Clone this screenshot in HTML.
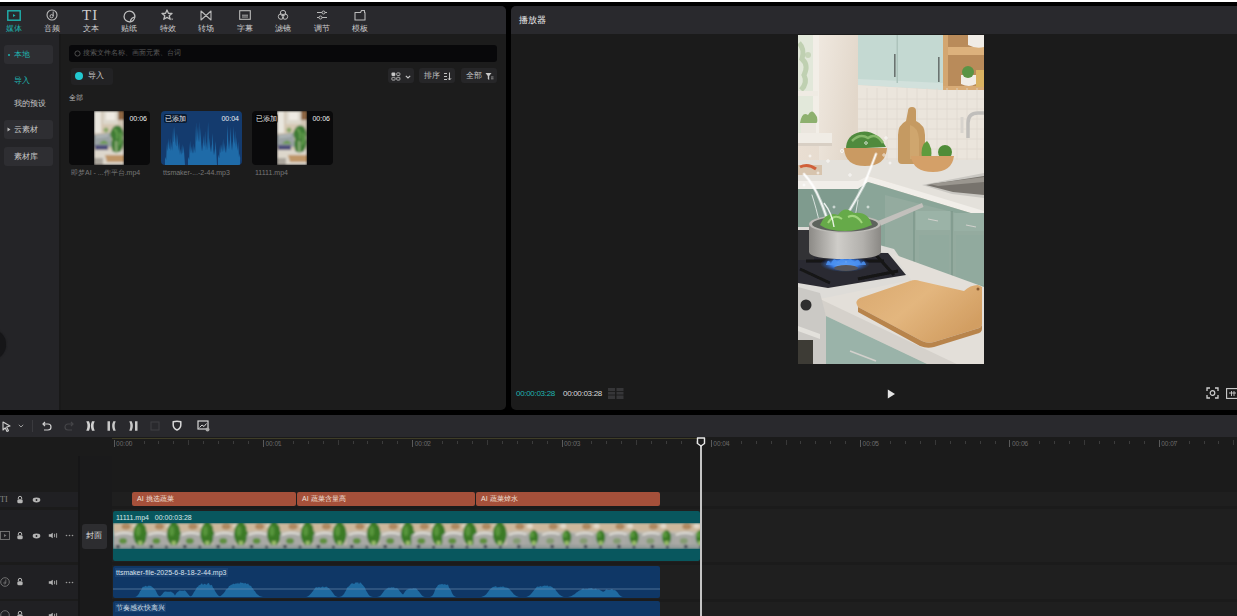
<!DOCTYPE html>
<html><head><meta charset="utf-8">
<style>
*{margin:0;padding:0;box-sizing:border-box}
html,body{width:1237px;height:616px;overflow:hidden;background:#000;font-family:"Liberation Sans",sans-serif;color:#ccc}
.a{position:absolute}
#top{left:0;top:0;width:1237px;height:2px;background:#fff}
#lp{left:0;top:6px;width:506px;height:404px;background:#1c1c1c;border-radius:0 5px 5px 0;overflow:hidden}
#lph{left:0;top:0;width:506px;height:28px;background:#29292d}
#side{left:0;top:28px;width:61px;height:376px;background:#242427;border-right:2px solid #191919}
#rp{left:511px;top:6px;width:726px;height:404px;background:#1b1b1b;border-radius:5px 0 0 5px;overflow:hidden}
#rph{left:0;top:0;width:726px;height:28px;background:#29292d}
#tl{left:0;top:415px;width:1237px;height:201px;background:#1b1b1b}
#tlb{left:0;top:0;width:1237px;height:22px;background:#29292d}
.ti{width:38px;text-align:center}
.ti svg{display:block;margin:0 auto}
.tl{font-size:7.5px;line-height:8px;font-weight:500;color:#cdcdcd;text-align:center;width:38px;white-space:nowrap}
.t{white-space:nowrap;line-height:1}
.tl,.sbt{font-weight:500}
.sb{left:4px;width:49px;height:19px;background:#2e2e32;border-radius:3px}
.card{width:81px;height:54px;background:#0a0a0b;border-radius:4px;overflow:hidden}
.dur{font-size:7px;color:#eee;top:4px;right:3px}
.added{font-size:7px;color:#eee;top:3px;left:3px;background:rgba(0,0,0,.55);padding:1px 1px;border-radius:2px}
.cname{font-size:7px;color:#777}
.rl{font-size:6.5px;color:#6a6a6a}
.clip{top:77px;height:14px;background:#a5503a;border-radius:2px}
.clip span{position:absolute;left:5px;top:3px;font-size:7px;color:#f0e0da;white-space:nowrap;line-height:1}
.strip{background:repeating-linear-gradient(90deg,#cfc5b5 0,#b8b0a5 8px,#5f8a3a 12px,#3f7a2a 20px,#c8bca8 26px,#cfc5b5 33px)}
.btn{height:15px;background:#262628;border-radius:3px}
</style></head><body>
<svg width="0" height="0" style="position:absolute"><defs><filter id="tb"><feGaussianBlur stdDeviation="0.8"/></filter></defs></svg>
<div class="a" id="top"></div>
<div class="a" id="lp">
  <div class="a" id="lph">
    <!-- toolbar icons -->
    <svg class="a" style="left:7px;top:4px" width="14" height="11" viewBox="0 0 14 11"><rect x="0.8" y="0.8" width="12.4" height="9.4" fill="none" stroke="#1fb3b0" stroke-width="1.4"/><path d="M6 4 L8.5 5.5 L6 7Z" fill="#1fb3b0"/></svg>
    <div class="a tl" style="left:-5px;top:19px;color:#1fb3b0">媒体</div>
    <svg class="a" style="left:46px;top:3px" width="12" height="12" viewBox="0 0 12 12"><circle cx="6" cy="6" r="5" fill="none" stroke="#bbb" stroke-width="1.1"/><path d="M7.2 2.5 V7" stroke="#bbb" stroke-width="1"/><circle cx="5.6" cy="7.2" r="1.6" fill="none" stroke="#bbb" stroke-width="1"/></svg>
    <div class="a tl" style="left:33px;top:19px">音频</div>
    <div class="a t" style="left:82px;top:2px;font-family:'Liberation Serif',serif;font-size:15px;color:#cdcdcd;letter-spacing:1px">TI</div>
    <div class="a tl" style="left:72px;top:19px">文本</div>
    <svg class="a" style="left:123px;top:4px" width="13" height="13" viewBox="0 0 13 13"><path d="M11.8 7.2 A5.4 5.4 0 1 0 7.2 11.8" fill="none" stroke="#bdbdbd" stroke-width="1.3"/><path d="M11.8 7.2 Q8 7.5 7.2 11.8 Q11 11.5 11.8 7.2Z" fill="none" stroke="#bdbdbd" stroke-width="1.2" stroke-linejoin="round"/></svg>
    <div class="a tl" style="left:110px;top:19px">贴纸</div>
    <svg class="a" style="left:161px;top:3px" width="13" height="13" viewBox="0 0 13 13"><path d="M6 1 L7.4 4.3 L11 4.5 L8.2 6.8 L9.2 10.3 L6 8.4 L2.8 10.3 L3.8 6.8 L1 4.5 L4.6 4.3Z" fill="none" stroke="#bdbdbd" stroke-width="1.3" stroke-linejoin="round"/><path d="M10.5 9.5 L12 11 M11.8 9.3 L10.3 11.2" stroke="#999" stroke-width="0.8"/></svg>
    <div class="a tl" style="left:149px;top:19px">特效</div>
    <svg class="a" style="left:200px;top:4px" width="12" height="11" viewBox="0 0 12 11"><path d="M1 1 L11 10 L11 1 L1 10Z" fill="none" stroke="#bbb" stroke-width="1.1" stroke-linejoin="round"/></svg>
    <div class="a tl" style="left:187px;top:19px">转场</div>
    <svg class="a" style="left:239px;top:4px" width="12" height="10" viewBox="0 0 12 10"><rect x="0.7" y="0.7" width="10.6" height="8.6" fill="none" stroke="#bbb" stroke-width="1.1"/><path d="M3 5.2 H9 M3 7 H9" stroke="#bbb" stroke-width="0.9"/></svg>
    <div class="a tl" style="left:226px;top:19px">字幕</div>
    <svg class="a" style="left:277px;top:3px" width="12" height="12" viewBox="0 0 12 12"><circle cx="6" cy="4" r="2.7" fill="none" stroke="#bbb" stroke-width="1"/><circle cx="4" cy="7.6" r="2.7" fill="none" stroke="#bbb" stroke-width="1"/><circle cx="8" cy="7.6" r="2.7" fill="none" stroke="#bbb" stroke-width="1"/></svg>
    <div class="a tl" style="left:264px;top:19px">滤镜</div>
    <svg class="a" style="left:316px;top:3px" width="12" height="12" viewBox="0 0 12 12"><path d="M1 3.5 H11 M1 8.5 H11" stroke="#bbb" stroke-width="1"/><circle cx="7.5" cy="3.5" r="1.5" fill="#29292d" stroke="#bbb" stroke-width="1"/><circle cx="4.5" cy="8.5" r="1.5" fill="#29292d" stroke="#bbb" stroke-width="1"/></svg>
    <div class="a tl" style="left:303px;top:19px">调节</div>
    <svg class="a" style="left:354px;top:3px" width="12" height="12" viewBox="0 0 12 12"><path d="M1 3.5 H6.5 L7.5 1.5 H10.5 V3.5 H11 V11 H1Z" fill="none" stroke="#bbb" stroke-width="1.1" stroke-linejoin="round"/></svg>
    <div class="a tl" style="left:341px;top:19px">模板</div>
  </div>
  <div class="a" id="side">
    <div class="a" style="left:-25px;top:295px;width:31px;height:31px;border-radius:50%;background:#161618;box-shadow:0 0 2px #161618"></div>
    <div class="a sb" style="top:11px"></div>
    <div class="a" style="left:8px;top:20px;width:2px;height:2px;border-radius:1px;background:#1fb3b0"></div>
    <div class="a t" style="left:14px;top:17px;font-size:8px;color:#1fb3b0">本地</div>
    <div class="a t" style="left:14px;top:43px;font-size:8px;color:#1fb3b0">导入</div>
    <div class="a t" style="left:14px;top:66px;font-size:8px;color:#c8c8c8">我的预设</div>
    <div class="a sb" style="top:86px"></div>
    <svg class="a" style="left:7px;top:93px" width="4" height="5"><path d="M0.5 0.5 L3.5 2.5 L0.5 4.5Z" fill="#bbb"/></svg>
    <div class="a t" style="left:14px;top:92px;font-size:8px;color:#c8c8c8">云素材</div>
    <div class="a sb" style="top:113px"></div>
    <div class="a t" style="left:14px;top:119px;font-size:8px;color:#c8c8c8">素材库</div>
  </div>
  <!-- search -->
  <div class="a" style="left:69px;top:39px;width:428px;height:17px;background:#08080a;border-radius:3px"></div>
  <svg class="a" style="left:74px;top:44px" width="7" height="7"><circle cx="3.5" cy="3.5" r="2.6" fill="none" stroke="#555" stroke-width="0.9"/></svg>
  <div class="a t" style="left:83px;top:44px;font-size:6.5px;color:#5a5a5a">搜索文件名称、画面元素、台词</div>
  <div class="a" style="left:71px;top:62px;width:42px;height:17px;background:#222224;border-radius:3px"></div>
  <div class="a" style="left:75px;top:66px;width:8px;height:8px;border-radius:50%;background:#22c8d0"></div>
  <div class="a t" style="left:88px;top:66px;font-size:8px;color:#c8c8c8">导入</div>
  <div class="a btn" style="left:388px;top:62px;width:26px"></div>
  <div class="a btn" style="left:419px;top:62px;width:36px"></div>
  <div class="a btn" style="left:461px;top:62px;width:36px"></div>
  <svg class="a" style="left:391px;top:66px" width="10" height="9" viewBox="0 0 10 9"><rect x="0.5" y="0.5" width="3.8" height="3.4" rx="1" fill="#c8c8c8"/><rect x="5.7" y="0.9" width="3.2" height="2.6" rx="0.6" fill="none" stroke="#bbb" stroke-width="0.9"/><rect x="0.9" y="5.3" width="3.2" height="2.8" rx="0.6" fill="none" stroke="#bbb" stroke-width="0.9"/><rect x="5.7" y="5.3" width="3.2" height="2.8" rx="0.6" fill="none" stroke="#bbb" stroke-width="0.9"/></svg>
  <svg class="a" style="left:405px;top:69px" width="6" height="4"><path d="M0.8 0.8 L3 3 L5.2 0.8" fill="none" stroke="#c8c8c8" stroke-width="1.1"/></svg>
  <div class="a t" style="left:424px;top:66px;font-size:7.5px;color:#c4c4c4">排序</div>
  <svg class="a" style="left:443px;top:66px" width="9" height="9" viewBox="0 0 9 9"><path d="M1 1.5 H4 M1 4.5 H4 M1 7.5 H4" stroke="#c4c4c4" stroke-width="1"/><path d="M6.5 0.5 V8 M5 6.3 L6.5 8 L8 6.3" fill="none" stroke="#c4c4c4" stroke-width="1"/></svg>
  <div class="a t" style="left:466px;top:66px;font-size:7.5px;color:#c4c4c4">全部</div>
  <svg class="a" style="left:485px;top:66px" width="9" height="9" viewBox="0 0 9 9"><path d="M0.5 1 H6.5 L4.2 4 V8 L2.8 7 V4Z" fill="#c8c8c8"/><path d="M6 5 H8.5 M6 6.8 H8.5" stroke="#aaa" stroke-width="0.8"/></svg>
  <div class="a t" style="left:69px;top:88px;font-size:7px;color:#bbb">全部</div>
  <!-- cards -->
  <div class="a card" style="left:69px;top:105px"><svg class="a" style="left:25px;top:0" width="30" height="54" viewBox="0 0 30 54"><g filter="url(#tb)"><rect width="30" height="54" fill="#d2c6b5"/><rect x="0" y="0" width="7" height="22" fill="#e9e6de"/><rect x="9" y="0" width="15" height="13" fill="#ddd8cc"/><rect x="12" y="1" width="9" height="8" fill="#efebe4"/><rect x="24" y="0" width="6" height="9" fill="#8e6642"/><rect x="7" y="13" width="14" height="10" fill="#d6c8b4"/><circle cx="12" cy="19" r="2.5" fill="#8aa868"/><path d="M0 24 L16 22 L18 36 H0Z" fill="#9aa2a4"/><path d="M2 26 L14 24.5" stroke="#c8cccc" stroke-width="1.2"/><path d="M5 33 Q10 26 15 33Z" fill="#6a9a50"/><rect x="1" y="34" width="13" height="6" fill="#50507a"/><rect x="0" y="39" width="30" height="15" fill="#ddd7cc"/><path d="M17 20 Q20 13 26 15 Q31 19 29 27 Q31 35 26 41 L19 41 Q16 34 18 28 Q15 23 17 20Z" fill="#3f7c34"/><path d="M20 18 Q24 20 23 28 M26 22 Q28 28 25 34" stroke="#6ea856" stroke-width="1.4" fill="none"/><rect x="21" y="30" width="2.5" height="12" fill="#86a870"/><path d="M11 44 H30 V51 H13Z" fill="#bf9668"/><rect x="0" y="47" width="9" height="7" fill="#aaa59c"/></g></svg><div class="a t dur">00:06</div></div>
  <div class="a card" style="left:161px;top:105px;background:#143b6e"><svg class="a" style="left:0;top:0" width="81" height="54"><path d="M4 54 L4.0 49.0 L4.6 45.7 L5.2 49.0 L5.5 40.2 L6.1 31.0 L6.7 40.2 L7.0 37.8 L7.6 27.1 L8.2 37.8 L8.5 37.7 L9.1 26.9 L9.7 37.7 L10.0 40.0 L10.6 30.6 L11.2 40.0 L11.5 31.1 L12.1 15.9 L12.7 31.1 L13.0 30.4 L13.6 14.7 L14.2 30.4 L14.5 34.8 L15.1 22.0 L15.7 34.8 L16.0 35.4 L16.6 23.0 L17.2 35.4 L17.5 40.0 L18.1 30.7 L18.7 40.0 L19.0 44.0 L19.6 37.4 L20.2 44.0 L20.5 41.5 L21.1 33.1 L21.7 41.5 L22.0 42.4 L22.6 34.6 L23.2 42.4 L24 54Z M27 54 L27.0 49.1 L27.6 45.8 L28.2 49.1 L28.5 39.4 L29.1 29.6 L29.7 39.4 L30.0 42.6 L30.6 35.0 L31.2 42.6 L31.5 41.2 L32.1 32.6 L32.7 41.2 L33.0 42.6 L33.6 34.9 L34.2 42.6 L34.5 28.3 L35.1 11.1 L35.7 28.3 L36.0 30.9 L36.6 15.4 L37.2 30.9 L37.5 28.0 L38.1 10.6 L38.7 28.0 L39.0 31.5 L39.6 16.5 L40.2 31.5 L40.5 40.5 L41.1 31.5 L41.7 40.5 L42.0 35.9 L42.6 23.8 L43.2 35.9 L43.5 33.5 L44.1 19.8 L44.7 33.5 L45.0 39.8 L45.6 30.3 L46.2 39.8 L46.5 28.1 L47.1 10.8 L47.7 28.1 L48.0 37.5 L48.6 26.5 L49.2 37.5 L49.5 41.4 L50.1 33.0 L50.7 41.4 L51.0 34.7 L51.6 21.9 L52.2 34.7 L52.5 44.3 L53.1 37.8 L53.7 44.3 L54.0 39.5 L54.6 29.8 L55.2 39.5 L56 54Z M57 54 L57.0 47.5 L57.6 43.2 L58.2 47.5 L58.5 41.8 L59.1 33.6 L59.7 41.8 L60.0 41.5 L60.6 33.1 L61.2 41.5 L61.5 38.1 L62.1 27.5 L62.7 38.1 L63.0 40.7 L63.6 31.8 L64.2 40.7 L64.5 42.1 L65.1 34.1 L65.7 42.1 L66.0 29.8 L66.6 13.6 L67.2 29.8 L67.5 38.7 L68.1 28.5 L68.7 38.7 L69.0 31.0 L69.6 15.7 L70.2 31.0 L70.5 39.7 L71.1 30.1 L71.7 39.7 L72.0 30.4 L72.6 14.6 L73.2 30.4 L73.5 33.1 L74.1 19.2 L74.7 33.1 L75.0 37.0 L75.6 25.7 L76.2 37.0 L76.5 39.9 L77.1 30.5 L77.7 39.9 L78.0 46.9 L78.6 42.2 L79.2 46.9 L79 54Z " fill="#1f6ba8"/></svg><div class="a t added">已添加</div><div class="a t dur">00:04</div></div>
  <div class="a card" style="left:252px;top:105px"><svg class="a" style="left:25px;top:0" width="30" height="54" viewBox="0 0 30 54"><g filter="url(#tb)"><rect width="30" height="54" fill="#d2c6b5"/><rect x="0" y="0" width="7" height="22" fill="#e9e6de"/><rect x="9" y="0" width="15" height="13" fill="#ddd8cc"/><rect x="12" y="1" width="9" height="8" fill="#efebe4"/><rect x="24" y="0" width="6" height="9" fill="#8e6642"/><rect x="7" y="13" width="14" height="10" fill="#d6c8b4"/><circle cx="12" cy="19" r="2.5" fill="#8aa868"/><path d="M0 24 L16 22 L18 36 H0Z" fill="#9aa2a4"/><path d="M2 26 L14 24.5" stroke="#c8cccc" stroke-width="1.2"/><path d="M5 33 Q10 26 15 33Z" fill="#6a9a50"/><rect x="1" y="34" width="13" height="6" fill="#50507a"/><rect x="0" y="39" width="30" height="15" fill="#ddd7cc"/><path d="M17 20 Q20 13 26 15 Q31 19 29 27 Q31 35 26 41 L19 41 Q16 34 18 28 Q15 23 17 20Z" fill="#3f7c34"/><path d="M20 18 Q24 20 23 28 M26 22 Q28 28 25 34" stroke="#6ea856" stroke-width="1.4" fill="none"/><rect x="21" y="30" width="2.5" height="12" fill="#86a870"/><path d="M11 44 H30 V51 H13Z" fill="#bf9668"/><rect x="0" y="47" width="9" height="7" fill="#aaa59c"/></g></svg><div class="a t added">已添加</div><div class="a t dur">00:06</div></div>
  <div class="a t cname" style="left:71px;top:163px">即梦AI - ...作平台.mp4</div>
  <div class="a t cname" style="left:163px;top:163px">ttsmaker-...-2-44.mp3</div>
  <div class="a t cname" style="left:255px;top:163px">11111.mp4</div>
</div>
<div class="a" id="rp">
  <div class="a" id="rph"><div class="a t" style="left:8px;top:10px;font-size:8.5px;font-weight:500;color:#e6e6e6">播放器</div></div>
  <div class="a" id="vid" style="left:287px;top:29px;width:186px;height:329px;background:#c9bca8;overflow:hidden"><svg class="a" style="left:0;top:0" width="186" height="329" viewBox="0 0 186 329">
<defs>
<filter id="bl" x="-5%" y="-5%" width="110%" height="110%"><feGaussianBlur stdDeviation="0.7"/></filter>
<linearGradient id="wall" x1="0" y1="0" x2="1" y2="0"><stop offset="0" stop-color="#e9ded2"/><stop offset="1" stop-color="#d9cbbb"/></linearGradient>
<linearGradient id="pot" x1="0" y1="0" x2="1" y2="0"><stop offset="0" stop-color="#8c8a86"/><stop offset="0.4" stop-color="#cfcdc9"/><stop offset="0.75" stop-color="#b2b0ac"/><stop offset="1" stop-color="#8a8884"/></linearGradient>
<linearGradient id="board" x1="0" y1="0" x2="1" y2="0.6"><stop offset="0" stop-color="#d9a86e"/><stop offset="0.5" stop-color="#e3b67e"/><stop offset="1" stop-color="#d29e62"/></linearGradient>
<linearGradient id="wall2" x1="0" y1="0" x2="1" y2="0.4"><stop offset="0" stop-color="#efe8df"/><stop offset="1" stop-color="#e2d7ca"/></linearGradient>
<radialGradient id="flame" cx="0.5" cy="0.5" r="0.5"><stop offset="0" stop-color="#9fd0ff"/><stop offset="0.55" stop-color="#3b7fe6"/><stop offset="1" stop-color="#2a4a9a" stop-opacity="0"/></radialGradient>
</defs>
<g filter="url(#bl)">
<rect width="186" height="329" fill="url(#wall)"/>
<!-- window -->
<rect x="0" y="0" width="17" height="98" fill="#e2e8da"/>
<path d="M1 8 Q7 14 4 24 Q11 30 6 40 Q10 48 3 55" stroke="#a9c096" stroke-width="5" fill="none" opacity="0.6"/><circle cx="10" cy="20" r="3" fill="#b5c8a4" opacity="0.6"/>
<rect x="15" y="0" width="6" height="104" fill="#f2eee7"/>
<rect x="0" y="56" width="20" height="5" fill="#efebe3"/>
<!-- wall shading -->
<rect x="21" y="0" width="39" height="125" fill="url(#wall2)"/>
<!-- upper cabinets -->
<path d="M60 0 H145 V55 L60 50Z" fill="#c4d9d2"/>
<path d="M60 44 L145 48 V55 L60 50Z" fill="#d2e1dc"/>
<rect x="98.5" y="0" width="1.5" height="48" fill="#adc4bc"/>
<rect x="96" y="19" width="1.6" height="23" fill="#6b736f"/>
<rect x="140" y="22" width="1.6" height="25" fill="#6b736f"/>
<!-- shelf -->
<rect x="145" y="0" width="41" height="61" fill="#d3a670"/>
<rect x="150" y="0" width="36" height="51" fill="#b98b5a"/>
<rect x="150" y="12" width="36" height="8" fill="#dcb17c"/>
<rect x="145" y="51" width="41" height="10" fill="#d8ab76"/>
<path d="M170 0 H186 V12 Q178 14 170 10Z" fill="#f0ece6"/>
<path d="M163 40 H178 V49 Q171 53 163 49Z" fill="#f1ede7"/>
<circle cx="170" cy="37" r="6" fill="#5a9444"/>
<rect x="178" y="35" width="8" height="17" fill="#d9b262"/>
<!-- backsplash -->
<path d="M60 50 L145 55 H186 V125 H60Z" fill="#ebe5dc"/>
<g stroke="#e0d9cf" stroke-width="0.8"><path d="M60 64H186 M60 74H186 M60 84H186 M60 94H186 M60 104H186 M60 114H186 M60 124H186"/><path d="M69 53V125 M79 53V125 M89 53V125 M99 53V125 M109 53V125 M119 53V125 M129 53V125 M139 53V125 M149 53V125 M159 53V125 M169 53V125 M179 53V125"/></g>
<!-- counter back -->
<path d="M0 125 H186 V178 L87 146 L70 141 L60 150 H0Z" fill="#e4e1db"/>
<path d="M0 146 H60 L70 141 L87 146 L186 176 V182 L87 152 L70 147 L60 154 H0Z" fill="#f1eee9"/>
<path d="M0 130 H24 V140 H0Z" fill="#d7c4ae"/>
<path d="M2 132 Q10 128 18 134" stroke="#d0603a" stroke-width="3" fill="none"/>
<!-- sink -->
<path d="M124 150 L186 138 V163 L154 159Z" fill="#c9c7c2"/><path d="M128 150 L186 141 V160 L155 157Z" fill="#77736d"/><path d="M132 149 L186 142 V147 L140 151Z" fill="#9a968f"/>
<!-- sill + plant -->
<rect x="0" y="98" width="34" height="10" fill="#f0ece5"/>
<rect x="0" y="108" width="34" height="3" fill="#d8cfc4"/>
<path d="M3 88 H18 V98 H3Z" fill="#ebe6de"/>
<path d="M2 88 Q4 76 10 80 Q14 72 19 82 Q20 88 18 88Z" fill="#8db06e"/>
<!-- faucet -->
<path d="M170 103 V88 Q170 78 180 78 H186" stroke="#c0bebb" stroke-width="3.5" fill="none"/>
<path d="M164 82 V98" stroke="#d8d4ce" stroke-width="3"/>
<!-- standing board -->
<path d="M110 76 Q110 72 114 72 Q118 72 118 76 V86 Q127 90 127 100 V126 Q127 129 123 129 H104 Q100 129 100 125 V100 Q100 90 108 86Z" fill="#c59a62"/>
<path d="M112 90 Q120 92 121 104 V124 H112Z" fill="#d3ab74" opacity="0.7"/>
<!-- bowls -->
<path d="M48 114 Q48 100 62 97 Q78 94 88 112Z" fill="#4f8a3d"/>
<path d="M54 106 Q62 98 70 103 Q78 97 85 108" stroke="#86b86a" stroke-width="2.5" fill="none"/>
<path d="M46 113 H89 Q88 131 67 131 Q47 131 46 113Z" fill="#ca9a62"/>
<path d="M124 124 Q122 110 129 106 Q135 112 133 124Z" fill="#5e9b3e"/>
<circle cx="147" cy="117" r="7" fill="#4f8c38"/>
<path d="M113 121 H156 Q154 137 135 137 Q115 137 113 121Z" fill="#d4a068"/>
<!-- lower cabinets -->
<path d="M0 154 H60 L70 147 L87 152 L186 182 V262 H0Z" fill="#8aa598"/>
<path d="M87 160 L186 185 V250 H87Z" fill="#94ab9f"/>
<rect x="118" y="176" width="34" height="19" fill="#9bb3a7"/>
<rect x="156" y="178" width="30" height="18" fill="#98b0a4"/>
<rect x="121" y="200" width="30" height="48" fill="#91aa9e"/>
<rect x="158" y="200" width="28" height="50" fill="#91aa9e"/>
<path d="M116 175 V250 M154 176 V250" stroke="#7a9488" stroke-width="1.2"/>
<path d="M130 184 L140 186 M168 190 L178 192" stroke="#d0d0cc" stroke-width="1.2"/>
<path d="M0 154 H60 L60 215 H0Z" fill="#7f9b8e"/>
<!-- water splash -->
<g stroke="#ffffff" fill="none" stroke-linecap="round">
<path d="M6 139 Q16 150 22 165 Q28 178 32 196" stroke-width="3" opacity="0.55"/>
<path d="M6 139 Q16 150 22 165 Q28 178 32 196" stroke-width="1.2" opacity="0.9"/>
<path d="M78 119 Q72 135 66 150 Q58 165 50 178 Q46 186 44 194" stroke-width="3" opacity="0.5"/>
<path d="M78 119 Q72 135 66 150 Q58 165 50 178 Q46 186 44 194" stroke-width="1.2" opacity="0.9"/>
<path d="M14 160 Q18 172 22 190" stroke-width="1" opacity="0.7"/>
<path d="M60 165 Q58 176 56 190" stroke-width="1" opacity="0.7"/>
</g>
<g fill="none" stroke="#fff" stroke-width="0.8" opacity="0.9">
<circle cx="44" cy="116" r="1.5"/><circle cx="30" cy="126" r="1.2"/><circle cx="68" cy="108" r="1.3"/><circle cx="20" cy="138" r="1"/><circle cx="86" cy="120" r="1.2"/><circle cx="12" cy="121" r="1"/><circle cx="52" cy="140" r="1.2"/><circle cx="36" cy="172" r="1"/><circle cx="88" cy="103" r="1.2"/><circle cx="92" cy="128" r="1"/><circle cx="6" cy="150" r="1"/><circle cx="70" cy="172" r="1"/>
</g>
<!-- stove body -->
<path d="M0 192 H15 L96 214 L116 243 L97 255 L22 264 L0 262Z" fill="#dedcd8"/>
<path d="M0 217 L90 218 L108 240 L30 253 L0 248Z" fill="#2b2b30"/>
<path d="M0 195 H16 V225 H0Z" fill="#303035"/>
<path d="M2 234 L32 248 M78 220 L96 240 M8 226 H86 M60 244 L100 236" stroke="#131317" stroke-width="3"/>
<ellipse cx="47" cy="229" rx="25" ry="8" fill="url(#flame)"/><path d="M28 230 Q30 222 33 229 Q36 220 40 228 Q44 219 48 228 Q52 220 56 228 Q60 221 63 229 Q66 223 68 230Z" fill="#4a90f0" opacity="0.85"/>
<ellipse cx="48" cy="233" rx="12" ry="3" fill="#55555a"/>
<!-- pot -->
<path d="M80 186 L124 168 L125.5 172 L82 191Z" fill="#c2c0bc"/>
<path d="M11 189 H83 V217 Q82 224 47 224 Q12 224 11 217Z" fill="url(#pot)"/>
<ellipse cx="47" cy="189" rx="36" ry="9" fill="#bdbbb7"/>
<ellipse cx="47" cy="189" rx="33" ry="7.5" fill="#5d645c"/>
<path d="M22 190 Q28 176 40 180 Q46 170 56 178 Q70 176 74 190 Q60 196 47 196 Q30 196 22 190Z" fill="#66aa48"/>
<path d="M30 188 Q36 178 44 184 M50 182 Q58 178 64 188" stroke="#a2d67e" stroke-width="2" fill="none"/>
<path d="M26 168 Q34 178 36 192" stroke="#fff" stroke-width="1.4" fill="none" opacity="0.85"/>
<!-- counter right -->
<path d="M95 219 L186 252 V329 H129 L28 281 L22 264 L113 245Z" fill="#e3dfd9"/>
<path d="M22 264 L186 342 V356 L28 281Z" fill="#d5d1cb"/>
<path d="M28 281 L129 329 H28Z" fill="#9ab3a9"/>
<!-- cutting board -->
<path d="M60 272 Q56 266 62 263 L112 246 Q117 244 122 246 L166 256 Q172 250 180 250 L184 252 V289 Q184 293 178 294 L136 307 Q130 309 124 306 Z" fill="url(#board)"/>
<path d="M60 272 L124 306 Q130 309 136 307 L178 294 Q184 293 184 289 V294 Q184 298 178 299 L136 312 Q129 314 122 311 L60 277Z" fill="#b8844c"/>
<circle cx="180" cy="254" r="1.5" fill="#8a5a30"/>
<path d="M52 316 L78 326" stroke="#d2d0cc" stroke-width="1.6"/>
<!-- stove front -->
<path d="M0 252 L22 258 L28 281 V329 H0Z" fill="#cbc9c5"/>
<circle cx="8" cy="270" r="5.5" fill="#2d2d2d"/>
<path d="M0 291 L22 299 V304 L0 296Z" fill="#e3e1dc"/>
<rect x="0" y="305" width="15" height="24" fill="#3d3a36"/>
</g>
</svg>
</div>
  <div class="a t" style="left:5px;top:384px;font-size:8px;color:#1fb3b0;letter-spacing:-0.3px">00:00:03:28</div>
  <div class="a t" style="left:52px;top:384px;font-size:8px;color:#d8d8d8;letter-spacing:-0.3px">00:00:03:28</div>
  <svg class="a" style="left:97px;top:382px" width="16" height="11"><g fill="#363638"><rect x="0" y="0" width="7" height="11"/><rect x="8.5" y="0" width="7" height="11"/></g><path d="M0 3.5 H16 M0 7 H16" stroke="#1c1c1c" stroke-width="0.9"/></svg>
  <svg class="a" style="left:376px;top:383px" width="9" height="10"><path d="M0.8 0.5 L8 5 L0.8 9.5Z" fill="#e4e4e4"/></svg>
  <svg class="a" style="left:695px;top:381px" width="13" height="12" viewBox="0 0 13 12"><path d="M1 4 V1 H4 M9 1 H12 V4 M12 8 V11 H9 M4 11 H1 V8" fill="none" stroke="#cfcfcf" stroke-width="1.3"/><circle cx="6.5" cy="6" r="2.3" fill="none" stroke="#cfcfcf" stroke-width="1.2"/></svg>
  <svg class="a" style="left:715px;top:382px" width="12" height="11" viewBox="0 0 12 11"><rect x="0.6" y="0.6" width="11" height="9.8" fill="none" stroke="#cfcfcf" stroke-width="1.1"/><path d="M3 5 H10 M5.5 3 V8 M8 3 V8" stroke="#cfcfcf" stroke-width="0.9"/></svg>
</div>
<div class="a" id="tl">
  <div class="a" id="tlb">
    <svg class="a" style="left:2px;top:6px" width="9" height="11" viewBox="0 0 9 11"><path d="M1 1 L8 5 L4.6 6 L6.5 9.8 L5 10.4 L3.2 6.8 L1 9Z" fill="none" stroke="#cfcfcf" stroke-width="1.1" stroke-linejoin="round"/></svg>
    <svg class="a" style="left:18px;top:9px" width="6" height="4"><path d="M0.8 0.8 L3 3 L5.2 0.8" fill="none" stroke="#9a9a9a" stroke-width="1"/></svg>
    <div class="a" style="left:32px;top:5px;width:1px;height:12px;background:#3a3a3e"></div>
    <svg class="a" style="left:42px;top:6px" width="10" height="10" viewBox="0 0 10 10"><path d="M3 1 L1 3 L3 5 M1 3 H6 A3 3 0 0 1 6 9 H2" fill="none" stroke="#d0d0d0" stroke-width="1.2"/></svg>
    <svg class="a" style="left:64px;top:6px" width="10" height="10" viewBox="0 0 10 10"><path d="M7 1 L9 3 L7 5 M9 3 H4 A3 3 0 0 0 4 9 H8" fill="none" stroke="#454548" stroke-width="1.2"/></svg>
    <svg class="a" style="left:86px;top:6px" width="9" height="10" viewBox="0 0 9 10"><path d="M0.3 0.3 H3 Q5.2 5 3 9.7 H0.3 Q2.6 5 0.3 0.3Z M8.7 0.3 H6 Q3.8 5 6 9.7 H8.7 Q6.4 5 8.7 0.3Z" fill="#d0d0d0"/></svg>
    <svg class="a" style="left:107px;top:6px" width="9" height="10" viewBox="0 0 9 10"><path d="M0.5 0.3 H3 V9.7 H0.5Z M8.7 0.3 H6.3 Q4 5 6.3 9.7 H8.7 Q6.6 5 8.7 0.3Z" fill="#c8c8c8"/></svg>
    <svg class="a" style="left:129px;top:6px" width="9" height="10" viewBox="0 0 9 10"><path d="M0.3 0.3 H2.7 Q5 5 2.7 9.7 H0.3 Q2.4 5 0.3 0.3Z M6 0.3 H8.5 V9.7 H6Z" fill="#c8c8c8"/></svg>
    <svg class="a" style="left:150px;top:6px" width="10" height="10" viewBox="0 0 10 10"><rect x="1" y="1" width="8" height="8" fill="none" stroke="#3e3e42" stroke-width="1.1"/></svg>
    <svg class="a" style="left:172px;top:5px" width="10" height="11" viewBox="0 0 10 11"><path d="M1.2 1.8 Q5 0.6 8.8 1.8 V5 Q8.8 8.4 5 10 Q1.2 8.4 1.2 5Z" fill="none" stroke="#d8d8d8" stroke-width="1.5" stroke-linejoin="round"/></svg>
    <svg class="a" style="left:197px;top:5px" width="13" height="12" viewBox="0 0 13 12"><rect x="1" y="1" width="10" height="8" fill="none" stroke="#d8d8d8" stroke-width="1.2"/><path d="M2.5 7.5 L5 5 L7 6.5 L9.5 3.5" fill="none" stroke="#d8d8d8" stroke-width="1"/><circle cx="10.5" cy="9.5" r="2" fill="#aaa"/></svg>
  </div>
  <div class="a" style="left:112px;top:23px;width:589px;height:1px;background:#3f3d28"></div>
  <div class="a" style="left:80px;top:41px;width:32px;height:160px;background:#1a1a1b"></div>
  <div class="a" style="left:78px;top:41px;width:2px;height:160px;background:#161617"></div>
  <div class="a" style="left:113.6px;top:25px;width:1px;height:7px;background:#5a5a5a"></div>
  <div class="a" style="left:128.5px;top:26px;width:1px;height:3px;background:#3c3c3c"></div>
  <div class="a" style="left:143.5px;top:26px;width:1px;height:3px;background:#3c3c3c"></div>
  <div class="a" style="left:158.4px;top:26px;width:1px;height:3px;background:#3c3c3c"></div>
  <div class="a" style="left:173.3px;top:26px;width:1px;height:3px;background:#3c3c3c"></div>
  <div class="a" style="left:188.2px;top:25px;width:1px;height:5px;background:#383838"></div>
  <div class="a" style="left:203.2px;top:26px;width:1px;height:3px;background:#3c3c3c"></div>
  <div class="a" style="left:218.1px;top:26px;width:1px;height:3px;background:#3c3c3c"></div>
  <div class="a" style="left:233.0px;top:26px;width:1px;height:3px;background:#3c3c3c"></div>
  <div class="a" style="left:248.0px;top:26px;width:1px;height:3px;background:#3c3c3c"></div>
  <div class="a" style="left:262.9px;top:25px;width:1px;height:7px;background:#5a5a5a"></div>
  <div class="a" style="left:277.8px;top:26px;width:1px;height:3px;background:#3c3c3c"></div>
  <div class="a" style="left:292.8px;top:26px;width:1px;height:3px;background:#3c3c3c"></div>
  <div class="a" style="left:307.7px;top:26px;width:1px;height:3px;background:#3c3c3c"></div>
  <div class="a" style="left:322.6px;top:26px;width:1px;height:3px;background:#3c3c3c"></div>
  <div class="a" style="left:337.5px;top:25px;width:1px;height:5px;background:#383838"></div>
  <div class="a" style="left:352.5px;top:26px;width:1px;height:3px;background:#3c3c3c"></div>
  <div class="a" style="left:367.4px;top:26px;width:1px;height:3px;background:#3c3c3c"></div>
  <div class="a" style="left:382.3px;top:26px;width:1px;height:3px;background:#3c3c3c"></div>
  <div class="a" style="left:397.3px;top:26px;width:1px;height:3px;background:#3c3c3c"></div>
  <div class="a" style="left:412.2px;top:25px;width:1px;height:7px;background:#5a5a5a"></div>
  <div class="a" style="left:427.1px;top:26px;width:1px;height:3px;background:#3c3c3c"></div>
  <div class="a" style="left:442.1px;top:26px;width:1px;height:3px;background:#3c3c3c"></div>
  <div class="a" style="left:457.0px;top:26px;width:1px;height:3px;background:#3c3c3c"></div>
  <div class="a" style="left:471.9px;top:26px;width:1px;height:3px;background:#3c3c3c"></div>
  <div class="a" style="left:486.9px;top:25px;width:1px;height:5px;background:#383838"></div>
  <div class="a" style="left:501.8px;top:26px;width:1px;height:3px;background:#3c3c3c"></div>
  <div class="a" style="left:516.7px;top:26px;width:1px;height:3px;background:#3c3c3c"></div>
  <div class="a" style="left:531.6px;top:26px;width:1px;height:3px;background:#3c3c3c"></div>
  <div class="a" style="left:546.6px;top:26px;width:1px;height:3px;background:#3c3c3c"></div>
  <div class="a" style="left:561.5px;top:25px;width:1px;height:7px;background:#5a5a5a"></div>
  <div class="a" style="left:576.4px;top:26px;width:1px;height:3px;background:#3c3c3c"></div>
  <div class="a" style="left:591.4px;top:26px;width:1px;height:3px;background:#3c3c3c"></div>
  <div class="a" style="left:606.3px;top:26px;width:1px;height:3px;background:#3c3c3c"></div>
  <div class="a" style="left:621.2px;top:26px;width:1px;height:3px;background:#3c3c3c"></div>
  <div class="a" style="left:636.1px;top:25px;width:1px;height:5px;background:#383838"></div>
  <div class="a" style="left:651.1px;top:26px;width:1px;height:3px;background:#3c3c3c"></div>
  <div class="a" style="left:666.0px;top:26px;width:1px;height:3px;background:#3c3c3c"></div>
  <div class="a" style="left:680.9px;top:26px;width:1px;height:3px;background:#3c3c3c"></div>
  <div class="a" style="left:695.9px;top:26px;width:1px;height:3px;background:#3c3c3c"></div>
  <div class="a" style="left:710.8px;top:25px;width:1px;height:7px;background:#5a5a5a"></div>
  <div class="a" style="left:725.7px;top:26px;width:1px;height:3px;background:#3c3c3c"></div>
  <div class="a" style="left:740.7px;top:26px;width:1px;height:3px;background:#3c3c3c"></div>
  <div class="a" style="left:755.6px;top:26px;width:1px;height:3px;background:#3c3c3c"></div>
  <div class="a" style="left:770.5px;top:26px;width:1px;height:3px;background:#3c3c3c"></div>
  <div class="a" style="left:785.5px;top:25px;width:1px;height:5px;background:#383838"></div>
  <div class="a" style="left:800.4px;top:26px;width:1px;height:3px;background:#3c3c3c"></div>
  <div class="a" style="left:815.3px;top:26px;width:1px;height:3px;background:#3c3c3c"></div>
  <div class="a" style="left:830.2px;top:26px;width:1px;height:3px;background:#3c3c3c"></div>
  <div class="a" style="left:845.2px;top:26px;width:1px;height:3px;background:#3c3c3c"></div>
  <div class="a" style="left:860.1px;top:25px;width:1px;height:7px;background:#5a5a5a"></div>
  <div class="a" style="left:875.0px;top:26px;width:1px;height:3px;background:#3c3c3c"></div>
  <div class="a" style="left:890.0px;top:26px;width:1px;height:3px;background:#3c3c3c"></div>
  <div class="a" style="left:904.9px;top:26px;width:1px;height:3px;background:#3c3c3c"></div>
  <div class="a" style="left:919.8px;top:26px;width:1px;height:3px;background:#3c3c3c"></div>
  <div class="a" style="left:934.8px;top:25px;width:1px;height:5px;background:#383838"></div>
  <div class="a" style="left:949.7px;top:26px;width:1px;height:3px;background:#3c3c3c"></div>
  <div class="a" style="left:964.6px;top:26px;width:1px;height:3px;background:#3c3c3c"></div>
  <div class="a" style="left:979.5px;top:26px;width:1px;height:3px;background:#3c3c3c"></div>
  <div class="a" style="left:994.5px;top:26px;width:1px;height:3px;background:#3c3c3c"></div>
  <div class="a" style="left:1009.4px;top:25px;width:1px;height:7px;background:#5a5a5a"></div>
  <div class="a" style="left:1024.3px;top:26px;width:1px;height:3px;background:#3c3c3c"></div>
  <div class="a" style="left:1039.3px;top:26px;width:1px;height:3px;background:#3c3c3c"></div>
  <div class="a" style="left:1054.2px;top:26px;width:1px;height:3px;background:#3c3c3c"></div>
  <div class="a" style="left:1069.1px;top:26px;width:1px;height:3px;background:#3c3c3c"></div>
  <div class="a" style="left:1084.1px;top:25px;width:1px;height:5px;background:#383838"></div>
  <div class="a" style="left:1099.0px;top:26px;width:1px;height:3px;background:#3c3c3c"></div>
  <div class="a" style="left:1113.9px;top:26px;width:1px;height:3px;background:#3c3c3c"></div>
  <div class="a" style="left:1128.8px;top:26px;width:1px;height:3px;background:#3c3c3c"></div>
  <div class="a" style="left:1143.8px;top:26px;width:1px;height:3px;background:#3c3c3c"></div>
  <div class="a" style="left:1158.7px;top:25px;width:1px;height:7px;background:#5a5a5a"></div>
  <div class="a" style="left:1173.6px;top:26px;width:1px;height:3px;background:#3c3c3c"></div>
  <div class="a" style="left:1188.6px;top:26px;width:1px;height:3px;background:#3c3c3c"></div>
  <div class="a" style="left:1203.5px;top:26px;width:1px;height:3px;background:#3c3c3c"></div>
  <div class="a" style="left:1218.4px;top:26px;width:1px;height:3px;background:#3c3c3c"></div>
  <div class="a" style="left:1233.4px;top:25px;width:1px;height:5px;background:#383838"></div>
  <div class="a t rl" style="left:116.1px;top:26px">00:00</div>
  <div class="a t rl" style="left:265.4px;top:26px">00:01</div>
  <div class="a t rl" style="left:414.7px;top:26px">00:02</div>
  <div class="a t rl" style="left:564.0px;top:26px">00:03</div>
  <div class="a t rl" style="left:713.3px;top:26px">00:04</div>
  <div class="a t rl" style="left:862.6px;top:26px">00:05</div>
  <div class="a t rl" style="left:1011.9px;top:26px">00:06</div>
  <div class="a t rl" style="left:1161.2px;top:26px">00:07</div>
  <!-- track headers -->
  <div class="a" style="left:0;top:77px;width:78px;height:15px;background:#202023"></div>
  <div class="a" style="left:0;top:95px;width:78px;height:52px;background:#202023"></div>
  <div class="a" style="left:0;top:150px;width:78px;height:34px;background:#202023"></div>
  <div class="a" style="left:0;top:186px;width:78px;height:15px;background:#202023"></div>
  <div class="a" style="left:112px;top:77px;width:1125px;height:14px;background:#1f1f1f"></div>
  <div class="a" style="left:112px;top:94px;width:1125px;height:53px;background:#1f1f1f"></div>
  <div class="a" style="left:112px;top:150px;width:1125px;height:34px;background:#1f1f1f"></div>
  <div class="a" style="left:112px;top:187px;width:1125px;height:14px;background:#1f1f1f"></div>
  <div class="a t" style="left:0px;top:81px;font-family:'Liberation Serif',serif;font-size:8px;color:#888">TI</div>
  <svg class="a" style="left:16px;top:80px" width="8" height="9" viewBox="0 0 8 9"><path d="M2.3 4.2 V3 A1.7 1.7 0 0 1 5.7 3 V4.2" fill="none" stroke="#b4b4b4" stroke-width="1"/><rect x="1.3" y="4.2" width="5.4" height="4" rx="1.5" fill="#b4b4b4"/></svg>
  <svg class="a" style="left:32px;top:82px" width="9" height="6" viewBox="0 0 9 6"><ellipse cx="4.5" cy="3" rx="3.8" ry="2.4" fill="#b4b4b4"/><circle cx="4.5" cy="3" r="0.9" fill="#202023"/></svg>
  <svg class="a" style="left:0px;top:116px" width="10" height="9" viewBox="0 0 10 9"><rect x="0.5" y="0.5" width="9" height="8" fill="none" stroke="#777" stroke-width="0.9"/><path d="M4 3 L6.5 4.5 L4 6Z" fill="#777"/></svg>
  <svg class="a" style="left:16px;top:116px" width="8" height="9" viewBox="0 0 8 9"><path d="M2.3 4.2 V3 A1.7 1.7 0 0 1 5.7 3 V4.2" fill="none" stroke="#b4b4b4" stroke-width="1"/><rect x="1.3" y="4.2" width="5.4" height="4" rx="1.5" fill="#b4b4b4"/></svg>
  <svg class="a" style="left:32px;top:118px" width="9" height="6" viewBox="0 0 9 6"><ellipse cx="4.5" cy="3" rx="3.8" ry="2.4" fill="#b4b4b4"/><circle cx="4.5" cy="3" r="0.9" fill="#202023"/></svg>
  <svg class="a" style="left:48px;top:117px" width="10" height="7" viewBox="0 0 10 7"><path d="M0.8 2.2 H2.5 L4.8 0.8 V6.2 L2.5 4.8 H0.8Z" fill="#b0b0b0"/><path d="M6.6 1.8 V5.2 M8.6 1.2 V5.8" stroke="#b0b0b0" stroke-width="0.9"/></svg>
  <svg class="a" style="left:65px;top:119px" width="9" height="3"><circle cx="1.5" cy="1.5" r="0.8" fill="#999"/><circle cx="4.5" cy="1.5" r="0.8" fill="#999"/><circle cx="7.5" cy="1.5" r="0.8" fill="#999"/></svg>
  <svg class="a" style="left:0px;top:162px" width="10" height="10" viewBox="0 0 10 10"><circle cx="5" cy="5" r="4.3" fill="none" stroke="#777" stroke-width="0.9"/><path d="M5.8 2.5 V5.8" stroke="#777" stroke-width="0.8"/><circle cx="4.8" cy="6" r="1" fill="none" stroke="#777" stroke-width="0.8"/></svg>
  <svg class="a" style="left:16px;top:162px" width="8" height="9" viewBox="0 0 8 9"><path d="M2.3 4.2 V3 A1.7 1.7 0 0 1 5.7 3 V4.2" fill="none" stroke="#b4b4b4" stroke-width="1"/><rect x="1.3" y="4.2" width="5.4" height="4" rx="1.5" fill="#b4b4b4"/></svg>
  <svg class="a" style="left:48px;top:164px" width="10" height="7" viewBox="0 0 10 7"><path d="M0.8 2.2 H2.5 L4.8 0.8 V6.2 L2.5 4.8 H0.8Z" fill="#b0b0b0"/><path d="M6.6 1.8 V5.2 M8.6 1.2 V5.8" stroke="#b0b0b0" stroke-width="0.9"/></svg>
  <svg class="a" style="left:65px;top:166px" width="9" height="3"><circle cx="1.5" cy="1.5" r="0.8" fill="#999"/><circle cx="4.5" cy="1.5" r="0.8" fill="#999"/><circle cx="7.5" cy="1.5" r="0.8" fill="#999"/></svg>
  <svg class="a" style="left:0px;top:195px" width="10" height="10" viewBox="0 0 10 10"><circle cx="5" cy="5" r="4.3" fill="none" stroke="#777" stroke-width="0.9"/></svg>
  <svg class="a" style="left:16px;top:195px" width="8" height="9" viewBox="0 0 8 9"><path d="M2.3 4.2 V3 A1.7 1.7 0 0 1 5.7 3 V4.2" fill="none" stroke="#b4b4b4" stroke-width="1"/><rect x="1.3" y="4.2" width="5.4" height="4" rx="1.5" fill="#b4b4b4"/></svg>
  <svg class="a" style="left:48px;top:197px" width="10" height="7" viewBox="0 0 10 7"><path d="M0.8 2.2 H2.5 L4.8 0.8 V6.2 L2.5 4.8 H0.8Z" fill="#b0b0b0"/><path d="M6.6 1.8 V5.2 M8.6 1.2 V5.8" stroke="#b0b0b0" stroke-width="0.9"/></svg>
  <div class="a" style="left:82px;top:109px;width:25px;height:25px;background:#2d2d30;border-radius:3px"></div>
  <div class="a t" style="left:86px;top:117px;font-size:8px;color:#e0e0e0">封面</div>
  <!-- text clips -->
  <div class="a clip" style="left:132px;width:164px"><span>AI 挑选蔬菜</span></div>
  <div class="a clip" style="left:297px;width:178px"><span>AI 蔬菜含量高</span></div>
  <div class="a clip" style="left:476px;width:184px"><span>AI 蔬菜焯水</span></div>
  <!-- video clip -->
  <div class="a" style="left:113px;top:96px;width:587px;height:50px;background:#08575e;border-radius:2px;overflow:hidden">
    <div class="a t" style="left:3px;top:3px;font-size:7px;color:#d8e8e8">11111.mp4&nbsp;&nbsp;&nbsp;00:00:03:28</div>
    <svg class="a" style="left:0;top:12px" width="587" height="26" viewBox="0 0 587 26"><g filter="url(#tb)"><rect width="587" height="26" fill="#c4bcae"/><rect x="0.0" y="0" width="33.4" height="8" fill="#cdb89c"/><ellipse cx="13.0" cy="3.5" rx="4.5" ry="3" fill="#a67c50" opacity="0.8"/><ellipse cx="23.0" cy="3" rx="3" ry="2.5" fill="#e8e2d6" opacity="0.8"/><path d="M0.0 12 Q12.0 6 22.0 11 V22 H0.0Z" fill="#a9a9a5"/><path d="M2.0 12 Q11.0 8 20.0 11.5" stroke="#e4e2dc" stroke-width="1.6" fill="none"/><ellipse cx="10.0" cy="18" rx="4" ry="3" fill="#5f9040" opacity="1"/><ellipse cx="27.2" cy="11.0" rx="7.0" ry="11.5" fill="#3a7a28"/><ellipse cx="25.2" cy="8.0" rx="2.5" ry="5.0" fill="#6aa648" opacity="0.6"/><rect x="25.2" y="18" width="4" height="6" fill="#98bc68"/><rect x="0.0" y="22" width="33.4" height="4" fill="#969c9a"/><circle cx="5.0" cy="23.5" r="1.8" fill="#2a3440"/><circle cx="20.0" cy="24" r="1.5" fill="#34404c"/><rect x="33.4" y="0" width="33.4" height="8" fill="#cdb89c"/><ellipse cx="46.4" cy="3.5" rx="4.5" ry="3" fill="#a67c50" opacity="0.8"/><ellipse cx="56.4" cy="3" rx="3" ry="2.5" fill="#e8e2d6" opacity="0.8"/><path d="M33.4 12 Q45.4 6 55.4 11 V22 H33.4Z" fill="#a9a9a5"/><path d="M35.4 12 Q44.4 8 53.4 11.5" stroke="#e4e2dc" stroke-width="1.6" fill="none"/><ellipse cx="43.4" cy="18" rx="4" ry="3" fill="#5f9040" opacity="1"/><ellipse cx="60.8" cy="11.0" rx="7.0" ry="11.5" fill="#3a7a28"/><ellipse cx="58.8" cy="8.0" rx="2.5" ry="5.0" fill="#6aa648" opacity="0.6"/><rect x="58.8" y="18" width="4" height="6" fill="#98bc68"/><rect x="33.4" y="22" width="33.4" height="4" fill="#969c9a"/><circle cx="38.4" cy="23.5" r="1.8" fill="#2a3440"/><circle cx="53.4" cy="24" r="1.5" fill="#34404c"/><rect x="66.8" y="0" width="33.4" height="8" fill="#cdb89c"/><ellipse cx="79.8" cy="3.5" rx="4.5" ry="3" fill="#a67c50" opacity="0.8"/><ellipse cx="89.8" cy="3" rx="3" ry="2.5" fill="#e8e2d6" opacity="0.8"/><path d="M66.8 12 Q78.8 6 88.8 11 V22 H66.8Z" fill="#a9a9a5"/><path d="M68.8 12 Q77.8 8 86.8 11.5" stroke="#e4e2dc" stroke-width="1.6" fill="none"/><ellipse cx="76.8" cy="18" rx="4" ry="3" fill="#5f9040" opacity="1"/><ellipse cx="94.3" cy="11.0" rx="7.0" ry="11.5" fill="#3a7a28"/><ellipse cx="92.3" cy="8.0" rx="2.5" ry="5.0" fill="#6aa648" opacity="0.6"/><rect x="92.3" y="18" width="4" height="6" fill="#98bc68"/><rect x="66.8" y="22" width="33.4" height="4" fill="#969c9a"/><circle cx="71.8" cy="23.5" r="1.8" fill="#2a3440"/><circle cx="86.8" cy="24" r="1.5" fill="#34404c"/><rect x="100.2" y="0" width="33.4" height="8" fill="#cdb89c"/><ellipse cx="113.2" cy="3.5" rx="4.5" ry="3" fill="#a67c50" opacity="0.8"/><ellipse cx="123.2" cy="3" rx="3" ry="2.5" fill="#e8e2d6" opacity="0.8"/><path d="M100.2 12 Q112.2 6 122.2 11 V22 H100.2Z" fill="#a9a9a5"/><path d="M102.2 12 Q111.2 8 120.2 11.5" stroke="#e4e2dc" stroke-width="1.6" fill="none"/><ellipse cx="110.2" cy="18" rx="4" ry="3" fill="#5f9040" opacity="1"/><ellipse cx="127.9" cy="11.0" rx="7.0" ry="11.5" fill="#3a7a28"/><ellipse cx="125.9" cy="8.0" rx="2.5" ry="5.0" fill="#6aa648" opacity="0.6"/><rect x="125.9" y="18" width="4" height="6" fill="#98bc68"/><rect x="100.2" y="22" width="33.4" height="4" fill="#969c9a"/><circle cx="105.2" cy="23.5" r="1.8" fill="#2a3440"/><circle cx="120.2" cy="24" r="1.5" fill="#34404c"/><rect x="133.6" y="0" width="33.4" height="8" fill="#cdb89c"/><ellipse cx="146.6" cy="3.5" rx="4.5" ry="3" fill="#a67c50" opacity="0.8"/><ellipse cx="156.6" cy="3" rx="3" ry="2.5" fill="#e8e2d6" opacity="0.8"/><path d="M133.6 12 Q145.6 6 155.6 11 V22 H133.6Z" fill="#a9a9a5"/><path d="M135.6 12 Q144.6 8 153.6 11.5" stroke="#e4e2dc" stroke-width="1.6" fill="none"/><ellipse cx="143.6" cy="18" rx="4" ry="3" fill="#5f9040" opacity="1"/><ellipse cx="161.0" cy="11.0" rx="7.0" ry="11.5" fill="#3a7a28"/><ellipse cx="159.0" cy="8.0" rx="2.5" ry="5.0" fill="#6aa648" opacity="0.6"/><rect x="159.0" y="18" width="4" height="6" fill="#98bc68"/><rect x="133.6" y="22" width="33.4" height="4" fill="#969c9a"/><circle cx="138.6" cy="23.5" r="1.8" fill="#2a3440"/><circle cx="153.6" cy="24" r="1.5" fill="#34404c"/><rect x="167.0" y="0" width="33.4" height="8" fill="#cdb89c"/><ellipse cx="180.0" cy="3.5" rx="4.5" ry="3" fill="#a67c50" opacity="0.8"/><ellipse cx="190.0" cy="3" rx="3" ry="2.5" fill="#e8e2d6" opacity="0.8"/><path d="M167.0 12 Q179.0 6 189.0 11 V22 H167.0Z" fill="#a9a9a5"/><path d="M169.0 12 Q178.0 8 187.0 11.5" stroke="#e4e2dc" stroke-width="1.6" fill="none"/><ellipse cx="177.0" cy="18" rx="4" ry="3" fill="#5f9040" opacity="1"/><ellipse cx="194.7" cy="11.0" rx="7.0" ry="11.5" fill="#3a7a28"/><ellipse cx="192.7" cy="8.0" rx="2.5" ry="5.0" fill="#6aa648" opacity="0.6"/><rect x="192.7" y="18" width="4" height="6" fill="#98bc68"/><rect x="167.0" y="22" width="33.4" height="4" fill="#969c9a"/><circle cx="172.0" cy="23.5" r="1.8" fill="#2a3440"/><circle cx="187.0" cy="24" r="1.5" fill="#34404c"/><rect x="200.4" y="0" width="33.4" height="8" fill="#cdb89c"/><ellipse cx="213.4" cy="3.5" rx="4.5" ry="3" fill="#a67c50" opacity="0.8"/><ellipse cx="223.4" cy="3" rx="3" ry="2.5" fill="#e8e2d6" opacity="0.8"/><path d="M200.4 12 Q212.4 6 222.4 11 V22 H200.4Z" fill="#a9a9a5"/><path d="M202.4 12 Q211.4 8 220.4 11.5" stroke="#e4e2dc" stroke-width="1.6" fill="none"/><ellipse cx="210.4" cy="18" rx="4" ry="3" fill="#5f9040" opacity="1"/><ellipse cx="226.6" cy="11.0" rx="7.0" ry="11.5" fill="#3a7a28"/><ellipse cx="224.6" cy="8.0" rx="2.5" ry="5.0" fill="#6aa648" opacity="0.6"/><rect x="224.6" y="18" width="4" height="6" fill="#98bc68"/><rect x="200.4" y="22" width="33.4" height="4" fill="#969c9a"/><circle cx="205.4" cy="23.5" r="1.8" fill="#2a3440"/><circle cx="220.4" cy="24" r="1.5" fill="#34404c"/><rect x="233.8" y="0" width="33.4" height="8" fill="#cdb89c"/><ellipse cx="246.8" cy="3.5" rx="4.5" ry="3" fill="#a67c50" opacity="0.8"/><ellipse cx="256.8" cy="3" rx="3" ry="2.5" fill="#e8e2d6" opacity="0.8"/><path d="M233.8 12 Q245.8 6 255.8 11 V22 H233.8Z" fill="#a9a9a5"/><path d="M235.8 12 Q244.8 8 253.8 11.5" stroke="#e4e2dc" stroke-width="1.6" fill="none"/><ellipse cx="243.8" cy="18" rx="4" ry="3" fill="#5f9040" opacity="1"/><ellipse cx="260.7" cy="11.0" rx="7.0" ry="11.5" fill="#3a7a28"/><ellipse cx="258.7" cy="8.0" rx="2.5" ry="5.0" fill="#6aa648" opacity="0.6"/><rect x="258.7" y="18" width="4" height="6" fill="#98bc68"/><rect x="233.8" y="22" width="33.4" height="4" fill="#969c9a"/><circle cx="238.8" cy="23.5" r="1.8" fill="#2a3440"/><circle cx="253.8" cy="24" r="1.5" fill="#34404c"/><rect x="267.2" y="0" width="33.4" height="8" fill="#cdb89c"/><ellipse cx="280.2" cy="3.5" rx="4.5" ry="3" fill="#a67c50" opacity="0.8"/><ellipse cx="290.2" cy="3" rx="3" ry="2.5" fill="#e8e2d6" opacity="0.8"/><path d="M267.2 12 Q279.2 6 289.2 11 V22 H267.2Z" fill="#a9a9a5"/><path d="M269.2 12 Q278.2 8 287.2 11.5" stroke="#e4e2dc" stroke-width="1.6" fill="none"/><ellipse cx="277.2" cy="18" rx="4" ry="3" fill="#5f9040" opacity="1"/><ellipse cx="294.9" cy="11.0" rx="7.0" ry="11.5" fill="#3a7a28"/><ellipse cx="292.9" cy="8.0" rx="2.5" ry="5.0" fill="#6aa648" opacity="0.6"/><rect x="292.9" y="18" width="4" height="6" fill="#98bc68"/><rect x="267.2" y="22" width="33.4" height="4" fill="#969c9a"/><circle cx="272.2" cy="23.5" r="1.8" fill="#2a3440"/><circle cx="287.2" cy="24" r="1.5" fill="#34404c"/><rect x="300.6" y="0" width="33.4" height="8" fill="#cdb89c"/><ellipse cx="311.3" cy="3.5" rx="4.5" ry="3" fill="#a67c50" opacity="0.8"/><ellipse cx="321.3" cy="3" rx="3" ry="2.5" fill="#e8e2d6" opacity="0.8"/><path d="M298.3 12 Q310.3 6 320.3 11 V22 H298.3Z" fill="#a9a9a5"/><path d="M300.3 12 Q309.3 8 318.3 11.5" stroke="#e4e2dc" stroke-width="1.6" fill="none"/><ellipse cx="308.3" cy="18" rx="4" ry="3" fill="#5f9040" opacity="1"/><ellipse cx="325.5" cy="11.0" rx="7.0" ry="11.5" fill="#3a7a28"/><ellipse cx="323.5" cy="8.0" rx="2.5" ry="5.0" fill="#6aa648" opacity="0.6"/><rect x="323.5" y="18" width="4" height="6" fill="#98bc68"/><rect x="300.6" y="22" width="33.4" height="4" fill="#969c9a"/><circle cx="305.6" cy="23.5" r="1.8" fill="#2a3440"/><circle cx="320.6" cy="24" r="1.5" fill="#34404c"/><rect x="334.0" y="0" width="33.4" height="8" fill="#cdb89c"/><ellipse cx="342.3" cy="3.5" rx="4.5" ry="3" fill="#a67c50" opacity="0.8"/><ellipse cx="352.3" cy="3" rx="3" ry="2.5" fill="#e8e2d6" opacity="0.8"/><path d="M329.3 12 Q341.3 6 351.3 11 V22 H329.3Z" fill="#a9a9a5"/><path d="M331.3 12 Q340.3 8 349.3 11.5" stroke="#e4e2dc" stroke-width="1.6" fill="none"/><ellipse cx="339.3" cy="18" rx="4" ry="3" fill="#5f9040" opacity="1"/><ellipse cx="357.0" cy="11.0" rx="7.0" ry="11.5" fill="#3a7a28"/><ellipse cx="355.0" cy="8.0" rx="2.5" ry="5.0" fill="#6aa648" opacity="0.6"/><rect x="355.0" y="18" width="4" height="6" fill="#98bc68"/><rect x="334.0" y="22" width="33.4" height="4" fill="#969c9a"/><circle cx="339.0" cy="23.5" r="1.8" fill="#2a3440"/><circle cx="354.0" cy="24" r="1.5" fill="#34404c"/><rect x="367.4" y="0" width="33.4" height="8" fill="#cdb89c"/><ellipse cx="373.4" cy="3.5" rx="4.5" ry="3" fill="#a67c50" opacity="0.8"/><ellipse cx="383.4" cy="3" rx="3" ry="2.5" fill="#e8e2d6" opacity="0.8"/><path d="M360.4 12 Q372.4 6 382.4 11 V22 H360.4Z" fill="#a9a9a5"/><path d="M362.4 12 Q371.4 8 380.4 11.5" stroke="#e4e2dc" stroke-width="1.6" fill="none"/><ellipse cx="370.4" cy="18" rx="4" ry="3" fill="#5f9040" opacity="1"/><ellipse cx="386.8" cy="11.0" rx="7.0" ry="11.5" fill="#3a7a28"/><ellipse cx="384.8" cy="8.0" rx="2.5" ry="5.0" fill="#6aa648" opacity="0.6"/><rect x="384.8" y="18" width="4" height="6" fill="#98bc68"/><rect x="367.4" y="22" width="33.4" height="4" fill="#969c9a"/><circle cx="372.4" cy="23.5" r="1.8" fill="#2a3440"/><circle cx="387.4" cy="24" r="1.5" fill="#34404c"/><rect x="400.8" y="0" width="33.4" height="8" fill="#cdb89c"/><ellipse cx="406.8" cy="3.5" rx="4.5" ry="3" fill="#a67c50" opacity="0.8"/><ellipse cx="416.8" cy="3" rx="3" ry="2.5" fill="#e8e2d6" opacity="0.8"/><path d="M393.8 12 Q405.8 6 415.8 11 V22 H393.8Z" fill="#a9a9a5"/><path d="M395.8 12 Q404.8 8 413.8 11.5" stroke="#e4e2dc" stroke-width="1.6" fill="none"/><ellipse cx="403.8" cy="18" rx="4" ry="3" fill="#5f9040" opacity="0.5"/><path d="M412.8 12 Q422.8 7 432.8 12 V22 H412.8Z" fill="#a5a7a3"/><ellipse cx="420.8" cy="14.5" rx="4.5" ry="7.5" fill="#3a7a28"/><ellipse cx="418.8" cy="11.5" rx="2.5" ry="3.2" fill="#6aa648" opacity="0.6"/><rect x="418.8" y="18" width="4" height="6" fill="#98bc68"/><rect x="400.8" y="22" width="33.4" height="4" fill="#969c9a"/><circle cx="405.8" cy="23.5" r="1.8" fill="#2a3440"/><circle cx="420.8" cy="24" r="1.5" fill="#34404c"/><rect x="434.2" y="0" width="33.4" height="8" fill="#cdb89c"/><ellipse cx="440.2" cy="3.5" rx="4.5" ry="3" fill="#a67c50" opacity="0.8"/><ellipse cx="450.2" cy="3" rx="3" ry="2.5" fill="#e8e2d6" opacity="0.8"/><path d="M427.2 12 Q439.2 6 449.2 11 V22 H427.2Z" fill="#a9a9a5"/><path d="M429.2 12 Q438.2 8 447.2 11.5" stroke="#e4e2dc" stroke-width="1.6" fill="none"/><ellipse cx="437.2" cy="18" rx="4" ry="3" fill="#5f9040" opacity="0.5"/><path d="M445.8 12 Q455.8 7 465.8 12 V22 H445.8Z" fill="#a5a7a3"/><ellipse cx="453.8" cy="14.5" rx="4.5" ry="7.5" fill="#3a7a28"/><ellipse cx="451.8" cy="11.5" rx="2.5" ry="3.2" fill="#6aa648" opacity="0.6"/><rect x="451.8" y="18" width="4" height="6" fill="#98bc68"/><rect x="434.2" y="22" width="33.4" height="4" fill="#969c9a"/><circle cx="439.2" cy="23.5" r="1.8" fill="#2a3440"/><circle cx="454.2" cy="24" r="1.5" fill="#34404c"/><rect x="467.6" y="0" width="33.4" height="8" fill="#cdb89c"/><ellipse cx="473.6" cy="3.5" rx="4.5" ry="3" fill="#a67c50" opacity="0.8"/><ellipse cx="483.6" cy="3" rx="3" ry="2.5" fill="#e8e2d6" opacity="0.8"/><path d="M460.6 12 Q472.6 6 482.6 11 V22 H460.6Z" fill="#a9a9a5"/><path d="M462.6 12 Q471.6 8 480.6 11.5" stroke="#e4e2dc" stroke-width="1.6" fill="none"/><ellipse cx="470.6" cy="18" rx="4" ry="3" fill="#5f9040" opacity="0.5"/><path d="M479.7 12 Q489.7 7 499.7 12 V22 H479.7Z" fill="#a5a7a3"/><ellipse cx="487.7" cy="14.5" rx="4.5" ry="7.5" fill="#3a7a28"/><ellipse cx="485.7" cy="11.5" rx="2.5" ry="3.2" fill="#6aa648" opacity="0.6"/><rect x="485.7" y="18" width="4" height="6" fill="#98bc68"/><rect x="467.6" y="22" width="33.4" height="4" fill="#969c9a"/><circle cx="472.6" cy="23.5" r="1.8" fill="#2a3440"/><circle cx="487.6" cy="24" r="1.5" fill="#34404c"/><rect x="501.0" y="0" width="33.4" height="8" fill="#cdb89c"/><ellipse cx="507.0" cy="3.5" rx="4.5" ry="3" fill="#a67c50" opacity="0.8"/><ellipse cx="517.0" cy="3" rx="3" ry="2.5" fill="#e8e2d6" opacity="0.8"/><path d="M494.0 12 Q506.0 6 516.0 11 V22 H494.0Z" fill="#a9a9a5"/><path d="M496.0 12 Q505.0 8 514.0 11.5" stroke="#e4e2dc" stroke-width="1.6" fill="none"/><ellipse cx="504.0" cy="18" rx="4" ry="3" fill="#5f9040" opacity="0.5"/><path d="M513.1 12 Q523.1 7 533.1 12 V22 H513.1Z" fill="#a5a7a3"/><ellipse cx="521.1" cy="14.5" rx="4.5" ry="7.5" fill="#3a7a28"/><ellipse cx="519.1" cy="11.5" rx="2.5" ry="3.2" fill="#6aa648" opacity="0.6"/><rect x="519.1" y="18" width="4" height="6" fill="#98bc68"/><rect x="501.0" y="22" width="33.4" height="4" fill="#969c9a"/><circle cx="506.0" cy="23.5" r="1.8" fill="#2a3440"/><circle cx="521.0" cy="24" r="1.5" fill="#34404c"/><rect x="534.4" y="0" width="33.4" height="8" fill="#cdb89c"/><ellipse cx="540.4" cy="3.5" rx="4.5" ry="3" fill="#a67c50" opacity="0.8"/><ellipse cx="550.4" cy="3" rx="3" ry="2.5" fill="#e8e2d6" opacity="0.8"/><path d="M527.4 12 Q539.4 6 549.4 11 V22 H527.4Z" fill="#a9a9a5"/><path d="M529.4 12 Q538.4 8 547.4 11.5" stroke="#e4e2dc" stroke-width="1.6" fill="none"/><ellipse cx="537.4" cy="18" rx="4" ry="3" fill="#5f9040" opacity="0.5"/><path d="M545.6 12 Q555.6 7 565.6 12 V22 H545.6Z" fill="#a5a7a3"/><ellipse cx="553.6" cy="14.5" rx="4.5" ry="7.5" fill="#3a7a28"/><ellipse cx="551.6" cy="11.5" rx="2.5" ry="3.2" fill="#6aa648" opacity="0.6"/><rect x="551.6" y="18" width="4" height="6" fill="#98bc68"/><rect x="534.4" y="22" width="33.4" height="4" fill="#969c9a"/><circle cx="539.4" cy="23.5" r="1.8" fill="#2a3440"/><circle cx="554.4" cy="24" r="1.5" fill="#34404c"/><rect x="567.8" y="0" width="33.4" height="8" fill="#cdb89c"/><ellipse cx="573.8" cy="3.5" rx="4.5" ry="3" fill="#a67c50" opacity="0.8"/><ellipse cx="583.8" cy="3" rx="3" ry="2.5" fill="#e8e2d6" opacity="0.8"/><path d="M560.8 12 Q572.8 6 582.8 11 V22 H560.8Z" fill="#a9a9a5"/><path d="M562.8 12 Q571.8 8 580.8 11.5" stroke="#e4e2dc" stroke-width="1.6" fill="none"/><ellipse cx="570.8" cy="18" rx="4" ry="3" fill="#5f9040" opacity="0.5"/><path d="M579.3 12 Q589.3 7 599.3 12 V22 H579.3Z" fill="#a5a7a3"/><ellipse cx="587.3" cy="14.5" rx="4.5" ry="7.5" fill="#3a7a28"/><ellipse cx="585.3" cy="11.5" rx="2.5" ry="3.2" fill="#6aa648" opacity="0.6"/><rect x="585.3" y="18" width="4" height="6" fill="#98bc68"/><rect x="567.8" y="22" width="33.4" height="4" fill="#969c9a"/><circle cx="572.8" cy="23.5" r="1.8" fill="#2a3440"/><circle cx="587.8" cy="24" r="1.5" fill="#34404c"/><rect x="601.2" y="0" width="33.4" height="8" fill="#cdb89c"/><ellipse cx="607.2" cy="3.5" rx="4.5" ry="3" fill="#a67c50" opacity="0.8"/><ellipse cx="617.2" cy="3" rx="3" ry="2.5" fill="#e8e2d6" opacity="0.8"/><path d="M594.2 12 Q606.2 6 616.2 11 V22 H594.2Z" fill="#a9a9a5"/><path d="M596.2 12 Q605.2 8 614.2 11.5" stroke="#e4e2dc" stroke-width="1.6" fill="none"/><ellipse cx="604.2" cy="18" rx="4" ry="3" fill="#5f9040" opacity="0.5"/><path d="M612.8 12 Q622.8 7 632.8 12 V22 H612.8Z" fill="#a5a7a3"/><ellipse cx="620.8" cy="14.5" rx="4.5" ry="7.5" fill="#3a7a28"/><ellipse cx="618.8" cy="11.5" rx="2.5" ry="3.2" fill="#6aa648" opacity="0.6"/><rect x="618.8" y="18" width="4" height="6" fill="#98bc68"/><rect x="601.2" y="22" width="33.4" height="4" fill="#969c9a"/><circle cx="606.2" cy="23.5" r="1.8" fill="#2a3440"/><circle cx="621.2" cy="24" r="1.5" fill="#34404c"/></g></svg>
  </div>
  <!-- audio clip -->
  <div class="a" style="left:113px;top:151px;width:547px;height:32px;background:#0f3766;border-radius:2px;overflow:hidden">
    <div class="a t" style="left:2px;top:2px;font-size:7px;color:#d8e0ea;background:#1a4272;padding:1px 1px">ttsmaker-file-2025-6-8-18-2-44.mp3</div>
    <svg class="a" style="left:0;top:0" width="548" height="32"><path d="M0 31 L0 31.0 L1 31.0 L2 31.0 L3 31.0 L4 31.0 L5 31.0 L6 31.0 L7 31.0 L8 31.0 L9 31.0 L10 31.0 L11 31.0 L12 31.0 L13 31.0 L14 31.0 L15 31.0 L16 31.0 L17 31.0 L18 31.0 L19 31.0 L20 31.0 L21 31.0 L22 30.9 L23 30.7 L24 30.1 L25 29.0 L26 27.6 L27 25.2 L28 24.2 L29 22.1 L30 20.4 L31 21.1 L32 20.0 L33 19.7 L34 20.7 L35 20.1 L36 19.5 L37 20.0 L38 19.7 L39 21.0 L40 21.4 L41 22.7 L42 23.6 L43 25.1 L44 27.3 L45 28.9 L46 30.1 L47 30.3 L48 29.4 L49 28.4 L50 27.2 L51 26.0 L52 25.5 L53 25.6 L54 25.8 L55 25.7 L56 25.7 L57 25.7 L58 25.4 L59 26.4 L60 26.8 L61 28.1 L62 29.4 L63 27.8 L64 26.4 L65 25.8 L66 24.9 L67 24.2 L68 24.9 L69 24.4 L70 24.9 L71 24.5 L72 24.4 L73 25.6 L74 26.7 L75 28.0 L76 29.2 L77 30.2 L78 30.2 L79 29.4 L80 28.0 L81 26.0 L82 24.7 L83 23.0 L84 21.1 L85 20.8 L86 19.0 L87 19.3 L88 18.1 L89 17.2 L90 19.0 L91 17.9 L92 17.8 L93 18.8 L94 18.6 L95 17.1 L96 17.3 L97 19.4 L98 18.8 L99 19.3 L100 21.7 L101 22.7 L102 25.0 L103 26.5 L104 27.9 L105 29.2 L106 30.1 L107 30.3 L108 29.7 L109 28.8 L110 27.9 L111 26.8 L112 25.6 L113 23.6 L114 22.7 L115 22.2 L116 19.9 L117 19.8 L118 18.8 L119 18.7 L120 17.8 L121 17.8 L122 18.2 L123 16.9 L124 18.0 L125 16.5 L126 18.2 L127 16.5 L128 16.4 L129 17.1 L130 16.7 L131 17.8 L132 16.8 L133 17.6 L134 18.3 L135 17.2 L136 18.9 L137 19.7 L138 19.8 L139 21.7 L140 22.5 L141 24.5 L142 25.2 L143 27.0 L144 28.2 L145 28.8 L146 29.8 L147 30.2 L148 30.6 L149 30.8 L150 30.9 L151 31.0 L152 31.0 L153 31.0 L154 31.0 L155 31.0 L156 31.0 L157 31.0 L158 31.0 L159 31.0 L160 31.0 L161 31.0 L162 31.0 L163 31.0 L164 31.0 L165 31.0 L166 31.0 L167 31.0 L168 31.0 L169 31.0 L170 31.0 L171 31.0 L172 31.0 L173 31.0 L174 31.0 L175 31.0 L176 31.0 L177 31.0 L178 31.0 L179 31.0 L180 31.0 L181 31.0 L182 31.0 L183 31.0 L184 31.0 L185 31.0 L186 31.0 L187 31.0 L188 31.0 L189 31.0 L190 31.0 L191 31.0 L192 31.0 L193 30.9 L194 30.7 L195 30.3 L196 29.5 L197 28.6 L198 27.6 L199 26.3 L200 24.9 L201 23.5 L202 22.2 L203 21.0 L204 21.5 L205 21.6 L206 20.8 L207 21.4 L208 21.5 L209 20.7 L210 20.5 L211 21.6 L212 21.0 L213 20.7 L214 20.8 L215 21.9 L216 21.9 L217 23.8 L218 24.3 L219 25.7 L220 27.1 L221 28.6 L222 29.7 L223 30.3 L224 30.7 L225 30.9 L226 31.0 L227 30.8 L228 30.6 L229 30.1 L230 29.1 L231 27.9 L232 25.9 L233 24.6 L234 21.8 L235 21.1 L236 20.2 L237 19.0 L238 17.8 L239 17.2 L240 17.5 L241 17.9 L242 17.2 L243 16.1 L244 17.0 L245 16.1 L246 18.3 L247 16.3 L248 16.9 L249 18.2 L250 19.2 L251 20.5 L252 21.7 L253 24.6 L254 25.9 L255 27.7 L256 29.2 L257 30.0 L258 30.6 L259 30.8 L260 31.0 L261 31.0 L262 31.0 L263 31.0 L264 31.0 L265 30.8 L266 30.5 L267 30.0 L268 29.2 L269 27.7 L270 26.4 L271 25.0 L272 23.7 L273 23.5 L274 22.2 L275 22.2 L276 21.3 L277 22.2 L278 21.3 L279 21.4 L280 21.6 L281 21.2 L282 22.5 L283 21.9 L284 22.2 L285 22.7 L286 23.9 L287 25.4 L288 26.6 L289 27.8 L290 28.4 L291 27.2 L292 25.6 L293 24.4 L294 23.5 L295 23.6 L296 22.4 L297 22.9 L298 22.3 L299 23.3 L300 22.1 L301 22.6 L302 22.2 L303 22.4 L304 23.1 L305 24.8 L306 25.6 L307 27.0 L308 28.2 L309 29.6 L310 30.3 L311 30.7 L312 30.9 L313 31.0 L314 31.0 L315 31.0 L316 31.0 L317 30.9 L318 30.6 L319 30.0 L320 28.8 L321 27.0 L322 24.1 L323 21.7 L324 20.8 L325 18.9 L326 18.7 L327 18.2 L328 18.4 L329 17.8 L330 18.6 L331 18.6 L332 18.0 L333 18.9 L334 18.7 L335 18.5 L336 21.4 L337 23.0 L338 24.3 L339 27.1 L340 28.7 L341 29.9 L342 30.6 L343 30.9 L344 31.0 L345 31.0 L346 31.0 L347 31.0 L348 31.0 L349 31.0 L350 31.0 L351 31.0 L352 31.0 L353 31.0 L354 31.0 L355 31.0 L356 31.0 L357 31.0 L358 31.0 L359 31.0 L360 31.0 L361 31.0 L362 31.0 L363 31.0 L364 31.0 L365 31.0 L366 31.0 L367 31.0 L368 30.9 L369 30.7 L370 30.3 L371 29.9 L372 29.2 L373 28.4 L374 27.3 L375 26.1 L376 24.5 L377 23.2 L378 22.5 L379 21.6 L380 21.0 L381 20.7 L382 20.4 L383 20.1 L384 21.5 L385 21.1 L386 21.2 L387 20.7 L388 20.8 L389 21.1 L390 20.3 L391 21.1 L392 21.5 L393 21.6 L394 21.7 L395 22.0 L396 22.8 L397 23.8 L398 25.1 L399 26.0 L400 27.2 L401 28.4 L402 29.1 L403 29.9 L404 30.3 L405 30.7 L406 30.9 L407 31.0 L408 31.0 L409 31.0 L410 31.0 L411 31.0 L412 30.9 L413 30.9 L414 30.7 L415 30.3 L416 29.7 L417 28.9 L418 28.1 L419 26.7 L420 25.6 L421 24.3 L422 22.9 L423 21.7 L424 20.7 L425 20.4 L426 20.9 L427 20.1 L428 20.3 L429 20.8 L430 19.8 L431 20.0 L432 19.2 L433 20.2 L434 19.3 L435 19.9 L436 20.7 L437 19.7 L438 20.7 L439 20.7 L440 22.0 L441 22.8 L442 22.5 L443 24.7 L444 25.8 L445 27.0 L446 28.2 L447 28.9 L448 29.7 L449 30.3 L450 30.7 L451 30.9 L452 30.9 L453 31.0 L454 30.9 L455 30.9 L456 30.7 L457 30.5 L458 30.2 L459 29.8 L460 29.1 L461 28.5 L462 27.9 L463 26.7 L464 26.2 L465 25.5 L466 24.8 L467 24.2 L468 24.0 L469 23.1 L470 22.6 L471 22.8 L472 23.4 L473 22.5 L474 23.3 L475 22.7 L476 22.2 L477 22.4 L478 22.1 L479 22.3 L480 23.0 L481 23.2 L482 22.8 L483 22.6 L484 23.4 L485 23.5 L486 23.3 L487 24.2 L488 24.5 L489 25.3 L490 25.7 L491 25.5 L492 24.7 L493 23.6 L494 23.5 L495 24.1 L496 24.0 L497 23.9 L498 23.5 L499 23.1 L500 24.0 L501 24.3 L502 24.1 L503 25.1 L504 25.8 L505 27.0 L506 28.4 L507 29.6 L508 30.3 L509 30.8 L510 30.9 L511 31.0 L512 31.0 L513 31.0 L514 31.0 L515 31.0 L516 31.0 L517 31.0 L518 31.0 L519 31.0 L520 31.0 L521 31.0 L522 31.0 L523 31.0 L524 31.0 L525 31.0 L526 31.0 L527 31.0 L528 31.0 L529 31.0 L530 31.0 L531 31.0 L532 31.0 L533 31.0 L534 31.0 L535 31.0 L536 31.0 L537 31.0 L538 31.0 L539 31.0 L540 31.0 L541 31.0 L542 31.0 L543 31.0 L544 31.0 L545 31.0 L546 31.0 L547 31.0 L548 31Z" fill="#1f6aa0"/><path d="M0 23 H548" stroke="#6f90b4" stroke-width="0.8" opacity="0.8"/></svg>
  </div>
  <div class="a" style="left:113px;top:186px;width:547px;height:20px;background:#0f3766;border-radius:2px">
    <div class="a t" style="left:2px;top:2px;font-size:7px;color:#d8e0ea;background:#1a4272;padding:1px 1px">节奏感欢快离兴</div>
  </div>
  <!-- playhead -->
  <div class="a" style="left:700px;top:30px;width:1.5px;height:171px;background:#c4c4c4"></div>
  <svg class="a" style="left:696px;top:22px" width="10" height="10" viewBox="0 0 10 10"><path d="M1.5 1 H8.5 V6.5 L5 9 L1.5 6.5Z" fill="#1c1c1c" stroke="#e8e8e8" stroke-width="1.4" stroke-linejoin="round"/></svg>
</div>
</body></html>
